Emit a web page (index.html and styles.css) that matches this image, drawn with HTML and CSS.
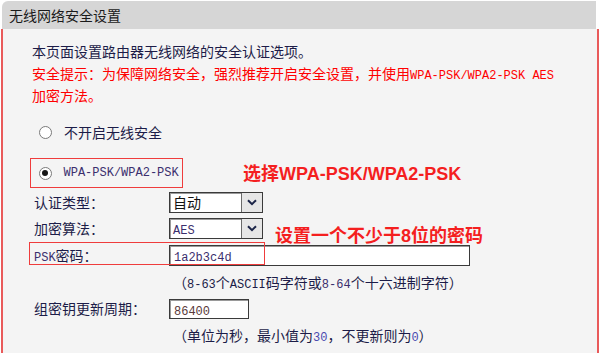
FILE: index.html
```html
<!DOCTYPE html>
<html lang="zh-CN">
<head>
<meta charset="utf-8">
<title>无线网络安全设置</title>
<link rel="stylesheet" href="styles.css">
</head>
<body>
<div class="page">
  <div class="header">无线网络安全设置</div>
  <div class="panel">
    <div class="intro">
      <div class="line desc">本页面设置路由器无线网络的安全认证选项。</div>
      <div class="line warn">安全提示：为保障网络安全，强烈推荐开启安全设置，并使用<span class="mono">WPA-PSK/WPA2-PSK AES</span></div>
      <div class="line warn">加密方法。</div>
    </div>
    <div class="radio-row r1"><span class="radio"></span><span class="label">不开启无线安全</span></div>
    <div class="radio-row r2"><span class="radio checked"></span><span class="mono purple">WPA-PSK/WPA2-PSK</span></div>
    <div class="form-row row-auth">
      <span class="flabel">认证类型：</span>
      <div class="select"><span class="sel-text">自动</span><span class="sel-btn"><svg width="10" height="7" viewBox="0 0 10 7"><path d="M1 1.2 L5 5.2 L9 1.2" fill="none" stroke="#1b2447" stroke-width="2"/></svg></span></div>
    </div>
    <div class="form-row row-enc">
      <span class="flabel">加密算法：</span>
      <div class="select"><span class="sel-text"><span class="mono purple">AES</span></span><span class="sel-btn"><svg width="10" height="7" viewBox="0 0 10 7"><path d="M1 1.2 L5 5.2 L9 1.2" fill="none" stroke="#1b2447" stroke-width="2"/></svg></span></div>
    </div>
    <div class="form-row row-psk">
      <span class="flabel"><span class="mono purple">PSK</span>密码：</span>
      <div class="input wide"><span class="mono purple">1a2b3c4d</span></div>
      <span class="psk-box"></span>
    </div>
    <div class="line hint hint1">（<span class="mono">8-63</span>个<span class="mono">ASCII</span>码字符或<span class="mono purple">8-64</span>个十六进制字符）</div>
    <div class="form-row row-gk">
      <span class="flabel">组密钥更新周期：</span>
      <div class="input short"><span class="mono brown">86400</span></div>
    </div>
    <div class="line hint hint2">（单位为秒，最小值为<span class="mono blue">30</span>，不更新则为<span class="mono blue">0</span>）</div>
  </div>
  <div class="note n1">选择WPA-PSK/WPA2-PSK</div>
  <div class="note n2">设置一个不少于8位的密码</div>
</div>
</body>
</html>
```
FILE: styles.css
```css
* { box-sizing: border-box; }
html, body { margin: 0; padding: 0; background: #ffffff; }
body {
  font-family: "Noto Sans CJK SC", "Noto Sans", sans-serif;
  font-size: 14px;
  color: #1f1f3f;
}
.page {
  position: relative;
  width: 600px;
  height: 353px;
  overflow: hidden;
}
.header {
  height: 28px;
  margin: 1px 4px 0 2px;
  background: #d6d6d6;
  border-top-left-radius: 6px;
  padding-left: 7px;
  line-height: 28px;
  color: #1a1a1a;
}
.panel {
  margin: 0 1px;
  height: 324px;
  background: #f4f4f4;
  border-left: 2px solid #e95a5a;
  border-right: 2px solid #e95a5a;
  padding-top: 11px;
}
.line {
  height: 22px;
  line-height: 22px;
  white-space: nowrap;
}
.intro { padding-left: 29px; }
.desc { color: #1c1c48; }
.warn { color: #ff0000; }
.mono {
  font-family: "Liberation Mono", monospace;
  font-size: 12px;
  line-height: 1;
}
.purple { color: #3b2f6e; }
.brown { color: #5a3a3a; }
.blue { color: #4a4ab0; }
.radio-row {
  display: flex;
  align-items: center;
  gap: 12px;
}
.r1 { margin-top: 15px; height: 22px; padding-left: 36px; }
.r2 {
  margin-top: 15px;
  margin-left: 27px;
  width: 153px;
  height: 30px;
  border: 1.5px solid #ef3c3c;
  padding-left: 7.5px;
}
.radio {
  width: 13px;
  height: 13px;
  border-radius: 50%;
  border: 1px solid #7a7a7a;
  background: #ffffff;
  display: flex;
  align-items: center;
  justify-content: center;
  flex: none;
}
.radio.checked::after {
  content: "";
  width: 6px;
  height: 6px;
  border-radius: 50%;
  background: #161616;
}
.label { color: #1c1c48; }
.form-row {
  display: flex;
  align-items: center;
  padding-left: 31px;
  position: relative;
}
.flabel {
  width: 135px;
  flex: none;
  color: #1c1c48;
  height: 21px;
  line-height: 21px;
  white-space: nowrap;
}
.row-auth { margin-top: 4px; height: 21px; }
.row-enc { margin-top: 5px; height: 21px; }
.row-psk { margin-top: 5px; height: 22px; }
.row-gk { margin-top: 5px; height: 21px; }
.select {
  width: 94px;
  height: 21px;
  border: 1px solid #3a3a3a;
  background: #ffffff;
  display: flex;
  box-shadow: inset 1px 1px 0 #9a9a9a;
}
.sel-text {
  flex: 1;
  padding-left: 3px;
  line-height: 19px;
  height: 19px;
  color: #111;
}
.sel-btn {
  width: 21px;
  border-left: 1px solid #6a6a6a;
  background: #e6e6e6;
  display: flex;
  align-items: center;
  justify-content: center;
}
.input {
  height: 21px;
  border: 1px solid #3a3a3a;
  box-shadow: inset 1px 1px 0 #9a9a9a;
  background: #ffffff;
  padding-left: 4px;
  line-height: 19px;
}
.input.wide { width: 301px; }
.input.short { width: 80px; height: 20px; line-height: 18px; }
.psk-box {
  position: absolute;
  left: 26px;
  top: -2px;
  width: 236px;
  height: 23px;
  border: 1.5px solid #ef3c3c;
  pointer-events: none;
}
.hint { padding-left: 170px; color: #1c1c48; }
.hint1 { margin-top: 5px; }
.hint2 { margin-top: 5px; }
.note {
  position: absolute;
  font-family: "Liberation Sans", "Noto Sans CJK SC", sans-serif;
  font-weight: bold;
  font-size: 18px;
  color: #f41f1f;
  line-height: 22px;
}
.n1 { left: 243px; top: 163px; }
.n2 { left: 275px; top: 225px; }
```
